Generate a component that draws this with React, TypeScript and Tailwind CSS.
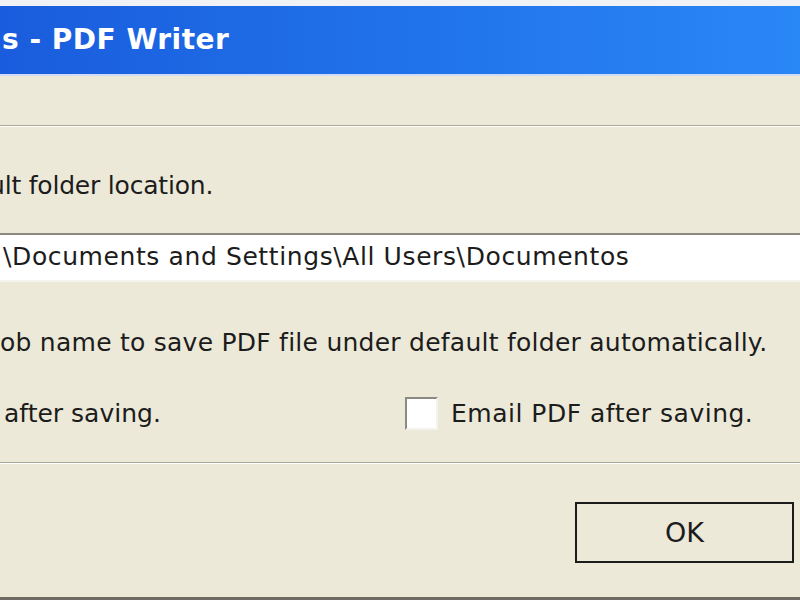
import React from "react";

export default function App() {
  const font = { fontFamily: '"DejaVu Sans", "Liberation Sans", sans-serif' };
  return (
    <div
      className="w-[800px] h-[600px] overflow-hidden bg-[#ece9d8] flex flex-col text-[#1c1c1c]"
      style={font}
    >
      <div className="h-[6px] bg-[#f1f2f6] shrink-0" />
      <div className="h-[68px] shrink-0 bg-gradient-to-r from-[#1a5cdd] to-[#2a87f6] flex items-center overflow-hidden">
        <span className="ml-[2px] text-white font-bold text-[28px] whitespace-nowrap tracking-[0.5px]">
          s - PDF Writer
        </span>
      </div>
      <div className="h-[2px] shrink-0 bg-[#cfdcf4]" />
      <div className="h-[49px] shrink-0" />
      <div className="h-[2px] shrink-0 border-t border-[#aca899] border-b border-b-white" />
      <div className="pt-[44px] shrink-0 flex overflow-hidden">
        <span className="ml-[-11px] text-[25px] leading-[30px] whitespace-nowrap tracking-[-0.2px]">
          ult folder location.
        </span>
      </div>
      <div className="h-[32px] shrink-0" />
      <div className="h-[49px] shrink-0 bg-white border-t-2 border-t-[#8c8a80] border-b-2 border-b-[#f4f3ee] flex items-center overflow-hidden">
        <span className="ml-[-6px] text-[25px] leading-[30px] whitespace-nowrap tracking-[0.6px] mt-[-2px]">
          :\Documents and Settings\All Users\Documentos
        </span>
      </div>
      <div className="pt-[46px] shrink-0 flex overflow-hidden">
        <span className="ml-[0px] text-[25px] leading-[30px] whitespace-nowrap tracking-[0.25px]">
          ob name to save PDF file under default folder automatically.
        </span>
      </div>
      <div className="h-[39px] shrink-0" />
      <div className="h-[33px] shrink-0 flex items-center overflow-hidden">
        <span className="ml-[4px] text-[25px] leading-[30px] whitespace-nowrap w-[401px] shrink-0">
          after saving.
        </span>
        <span className="w-[33px] h-[33px] bg-white border-2 border-t-[#8c8a80] border-l-[#8c8a80] border-r-[#f4f3ee] border-b-[#f4f3ee] shrink-0" />
        <span className="ml-[13px] text-[25px] leading-[30px] whitespace-nowrap tracking-[0.5px]">
          Email PDF after saving.
        </span>
      </div>
      <div className="h-[32px] shrink-0" />
      <div className="h-[2px] shrink-0 border-t border-[#aca899] border-b border-b-white" />
      <div className="h-[38px] shrink-0" />
      <div className="flex justify-end pr-[6px] shrink-0">
        <button className="w-[219px] h-[61px] border-2 border-[#1c1c1c] bg-[#ece9d8] text-[27px] leading-[30px] flex items-center justify-center">
          OK
        </button>
      </div>
      <div className="flex-1" />
      <div className="h-[3px] shrink-0 bg-[#6e6c62]" />
    </div>
  );
}
